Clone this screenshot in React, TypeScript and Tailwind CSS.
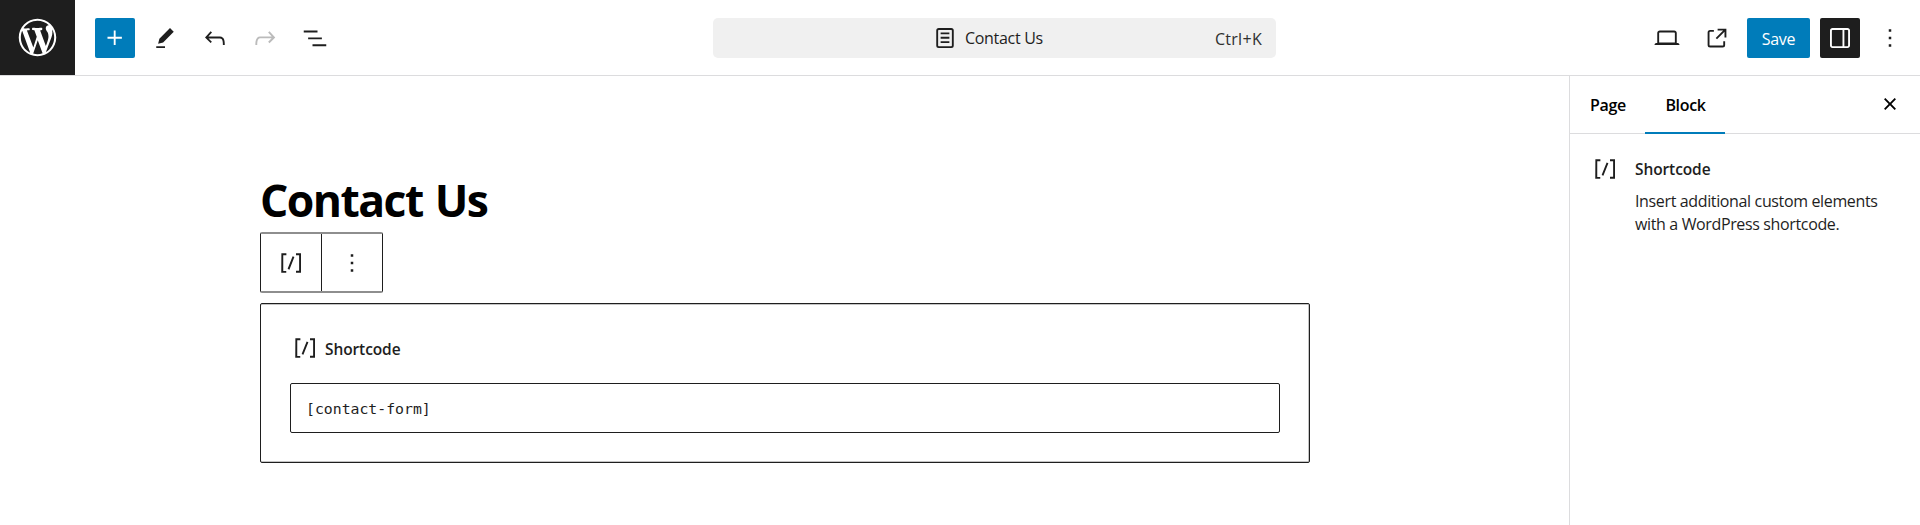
import React from "react";

const icons = {
  wordpress:
    "M20 10c0-5.51-4.49-10-10-10C4.48 0 0 4.49 0 10c0 5.52 4.48 10 10 10 5.51 0 10-4.48 10-10zM7.78 15.37L4.37 6.22c.55-.02 1.17-.08 1.17-.08.5-.06.44-1.13-.06-1.11 0 0-1.45.11-2.37.11-.18 0-.37 0-.58-.01C4.12 2.69 6.87 1.11 10 1.11c2.33 0 4.45.87 6.05 2.34-.68-.11-1.65.39-1.65 1.58 0 .74.45 1.36.9 2.1.35.61.55 1.36.55 2.46 0 1.49-1.4 5-1.4 5l-3.03-8.37c.54-.02.82-.17.82-.17.5-.05.44-1.25-.06-1.22 0 0-1.44.12-2.38.12-.87 0-2.33-.12-2.33-.12-.5-.03-.56 1.2-.06 1.22l.92.08 1.26 3.41zM17.41 10c.24-.64.74-1.87.43-4.25.7 1.29 1.05 2.71 1.05 4.25 0 3.29-1.73 6.24-4.4 7.78.97-2.59 1.94-5.2 2.92-7.78zM6.1 18.09C3.12 16.65 1.11 13.53 1.11 10c0-1.3.23-2.48.72-3.59C3.25 10.3 4.67 14.2 6.1 18.09zm4.03-6.63l2.58 6.98c-.86.29-1.76.45-2.71.45-.79 0-1.57-.11-2.29-.33.81-2.38 1.62-4.74 2.42-7.1z",
  plus: "M11 12.5V17.5H12.5V12.5H17.5V11H12.5V6H11V11H6V12.5H11Z",
  edit: "m19 7-3-3-8.5 8.5-1 4 4-1L19 7Zm-7 11.5H5V20h7v-1.5Z",
  undo: "M18.3 11.7c-.6-.6-1.4-.9-2.3-.9H6.7l2.9-3.3-1.1-1-4.5 5L8.5 16l1-1-2.7-2.7H16c.5 0 .9.2 1.3.5 1 1 1 3.4 1 4.5v.3h1.5v-.2c0-1.5 0-4.3-1.5-5.7z",
  redo: "M15.6 6.5l-1.1 1 2.9 3.3H8c-.9 0-1.7.3-2.3.9-1.4 1.5-1.4 4.2-1.4 5.6v.2h1.5v-.3c0-1.1 0-3.5 1-4.5.3-.3.7-.5 1.3-.5h9.2L14.5 15l1.1 1.1 4.6-4.6-4.6-5z",
  list: "M3 6h11v1.5H3V6Zm3.5 5.5h11V13h-11v-1.5ZM21 17H10v1.5h11V17Z",
  page: "M15.5 7.5h-7V9h7V7.5Zm-7 3.5h7v1.5h-7V11Zm7 3.5h-7V16h7v-1.5ZM17 4H7a2 2 0 0 0-2 2v12a2 2 0 0 0 2 2h10a2 2 0 0 0 2-2V6a2 2 0 0 0-2-2ZM7 5.5h10a.5.5 0 0 1 .5.5v12a.5.5 0 0 1-.5.5H7a.5.5 0 0 1-.5-.5V6a.5.5 0 0 1 .5-.5Z",
  desktop:
    "M20.5 16h-.7V8c0-1.1-.9-2-2-2H6.2c-1.1 0-2 .9-2 2v8h-.7c-.8 0-1.5.7-1.5 1.5h20c0-.8-.7-1.5-1.5-1.5zM5.7 8c0-.3.2-.5.5-.5h11.6c.3 0 .5.2.5.5v7.6H5.7V8z",
  external:
    "M19.5 4.5h-7V6h4.44l-5.97 5.97 1.06 1.06L18 7.06v4.44h1.5v-7Zm-13 1a2 2 0 0 0-2 2v10a2 2 0 0 0 2 2h10a2 2 0 0 0 2-2v-3H17v3a.5.5 0 0 1-.5.5h-10a.5.5 0 0 1-.5-.5v-10a.5.5 0 0 1 .5-.5h3V5.5h-3Z",
  drawer:
    "M18 4H6c-1.1 0-2 .9-2 2v12c0 1.1.9 2 2 2h12c1.1 0 2-.9 2-2V6c0-1.1-.9-2-2-2zm-4 14.5H6c-.3 0-.5-.2-.5-.5V6c0-.3.2-.5.5-.5h8v13zm4.5-.5c0 .3-.2.5-.5.5h-2.5v-13H18c.3 0 .5.2.5.5v12z",
  more: "M13 19h-2v-2h2v2zm0-6h-2v-2h2v2zm0-6h-2V5h2v2z",
  shortcode:
    "M16 4.2v1.5h2.5v12.5H16v1.5h4V4.2h-4zM4.2 19.8h4v-1.5H5.8V5.8h2.5V4.2h-4l-.1 15.6zm5.1-3.1l1.4.6 4-10-1.4-.6-4 10z",
  close:
    "M12 13.06l3.712 3.713 1.061-1.06L13.061 12l3.712-3.712-1.06-1.06L12 10.938 8.288 7.227l-1.061 1.06L10.939 12l-3.712 3.712 1.06 1.061L12 13.061z",
};

function Icon({ name, className = "" }: { name: keyof typeof icons; className?: string }) {
  return (
    <svg viewBox="0 0 24 24" className={`size-[30px] shrink-0 fill-current ${className}`} fillRule="evenodd" aria-hidden="true">
      <path d={icons[name]} />
    </svg>
  );
}

function ToolButton({ name, className = "" }: { name: keyof typeof icons; className?: string }) {
  return (
    <button className={`flex size-10 shrink-0 items-center justify-center rounded-[2px] ${className}`}>
      <Icon name={name} />
    </button>
  );
}

function Header() {
  return (
    <header className="flex h-[76px] shrink-0 items-start border-b border-[#dcdcde]">
      <div className="flex size-[75px] shrink-0 items-center justify-center bg-[#1e1e1e] text-white">
        <svg viewBox="-2 -2 24 24" className="size-[45px] fill-current" aria-hidden="true">
          <path d={icons.wordpress} />
        </svg>
      </div>
      <div className="flex h-[75px] flex-1 items-center pl-5">
        <div className="flex w-[618px] gap-[10px]">
          <ToolButton name="plus" className="bg-[#007cba] text-white" />
          <ToolButton name="edit" />
          <ToolButton name="undo" />
          <ToolButton name="redo" className="text-[#bbb]" />
          <ToolButton name="list" />
        </div>
        <div className="flex h-10 w-[563px] items-center rounded-[5px] bg-[#f0f0f0] pr-[14px]">
          <div className="flex flex-1 items-center pl-[217px]">
            <Icon name="page" />
            <span className="ml-[5px] pt-px text-[16px] tracking-[-0.3px]">Contact Us</span>
          </div>
          <span className="pt-[3px] text-[16px] tracking-[0.3px] text-[#2f2f2f]">Ctrl+K</span>
        </div>
        <div className="ml-auto flex gap-[10px] pr-[10px]">
          <ToolButton name="desktop" />
          <ToolButton name="external" />
          <button className="h-10 w-[63px] rounded-[2px] bg-[#007cba] pt-[3px] text-[16px] tracking-[-0.3px] text-white">Save</button>
          <ToolButton name="drawer" className="bg-[#1e1e1e] text-white" />
          <ToolButton name="more" />
        </div>
      </div>
    </header>
  );
}

function Editor() {
  return (
    <main className="flex-1 pl-[260px] pt-[94px]">
      <h1 className="h-[62px] whitespace-nowrap text-[44.5px] leading-[60px] font-bold tracking-[-1.55px] text-black [word-spacing:2px]">Contact Us</h1>
      <div className="flex h-[61px] w-[123px] rounded-[2px] border-x border-y-2 border-x-[#1e1e1e] border-y-[#8e8e8e]">
        <div className="flex w-[61px] items-center justify-center border-r border-[#1e1e1e]">
          <Icon name="shortcode" />
        </div>
        <div className="flex flex-1 items-center justify-center">
          <Icon name="more" />
        </div>
      </div>
      <section className="mt-[10px] h-[160px] w-[1050px] rounded-[2px] border border-[#1e1e1e] px-[29px] pt-[29px] shadow-[inset_-1px_0_#c4c4c4,inset_0_1px_#c4c4c4,inset_0_-1px_#c4c4c4]">
        <div className="flex h-[30px] items-center">
          <Icon name="shortcode" />
          <span className="ml-[5px] pt-[4px] text-[15.5px] font-semibold tracking-[-0.1px]">Shortcode</span>
        </div>
        <div className="mt-5 flex h-[50px] items-center rounded-[2px] border border-[#1e1e1e] pl-[15px]">
          <span className="pt-[3px] font-['DejaVu_Sans_Mono',monospace] text-[14.8px]">[contact-form]</span>
        </div>
      </section>
    </main>
  );
}

function Sidebar() {
  return (
    <aside className="w-[351px] shrink-0 border-l border-[#dcdcde]">
      <div className="flex h-[58px] border-b border-[#dcdcde] text-[16px] font-semibold tracking-[-0.35px] text-black">
        <div className="flex w-[75px] items-center justify-center pl-px pt-px">Page</div>
        <div className="-mb-px flex w-20 items-center justify-center border-b-2 border-[#007cba] pl-px pt-[2px]">Block</div>
        <div className="ml-auto flex items-center pr-[15px]">
          <Icon name="close" className="-mt-px" />
        </div>
      </div>
      <div className="flex pl-5 pt-5">
        <Icon name="shortcode" />
        <div className="ml-[15px]">
          <h2 className="text-[15.5px] leading-[31px] font-semibold tracking-[-0.1px]">Shortcode</h2>
          <p className="mt-[5px] whitespace-nowrap text-[16px] leading-[23px] tracking-[-0.36px]">
            Insert additional custom elements
            <br />
            with a WordPress shortcode.
          </p>
        </div>
      </div>
    </aside>
  );
}

export default function App() {
  return (
    <div className="flex h-[525px] w-[1920px] flex-col overflow-hidden bg-white font-['Open_Sans','Noto_Sans',sans-serif] text-[#1e1e1e]">
      <Header />
      <div className="flex min-h-0 flex-1">
        <Editor />
        <Sidebar />
      </div>
    </div>
  );
}
